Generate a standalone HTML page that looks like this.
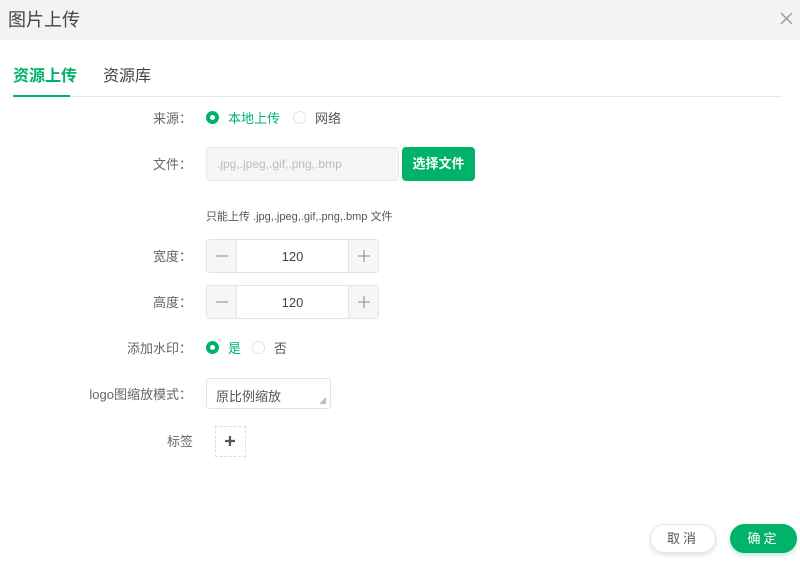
<!DOCTYPE html>
<html><head><meta charset="utf-8"><style>
*{box-sizing:border-box;margin:0;padding:0}
body{width:800px;height:562px;background:#fff;font-family:"Liberation Sans","Noto Sans CJK SC",sans-serif;position:relative;overflow:hidden;color:#555}
.a{position:absolute}
.hd{left:0;top:0;width:800px;height:40px;background:#f4f3f1}
.lbl{right:608px;font-size:13px;color:#666;text-align:right;white-space:nowrap}
.radio{width:13px;height:13px;border-radius:50%}
.on{background:#fff;border:4px solid #00b26a}
.off{border:1px solid #e4e4e4;background:#fff}
.num{width:173px;height:34px;border:1px solid #e2e4e8;border-radius:3px;display:flex;font-size:13px;color:#444}
.num div{display:flex;align-items:center;justify-content:center}
.num .b{width:29px;background:#f5f6f8}
.num .m{flex:1;border-left:1px solid #e2e4e8;border-right:1px solid #e2e4e8}
</style></head><body>
<div class="a hd"></div>
<div class="a" style="left:8px;top:6px;font-size:18px;color:#444">图片上传</div>
<svg class="a" style="left:780px;top:12px" width="13" height="13"><path d="M1 1L12 12M12 1L1 12" stroke="#999" stroke-width="1.4"/></svg>
<div class="a" style="left:13px;top:62px;font-size:16px;font-weight:bold;color:#00b26a">资源上传</div>
<div class="a" style="left:103px;top:62px;font-size:16px;color:#444">资源库</div>
<div class="a" style="left:13px;top:96px;width:769px;height:1px;background:#e6e6e6"></div>
<div class="a" style="left:13px;top:95px;width:57px;height:2px;background:#00b26a"></div>

<div class="a lbl" style="top:108px">来源：</div>
<div class="a radio on" style="left:206px;top:111px"></div>
<div class="a" style="left:228px;top:108px;font-size:13px;color:#00b26a">本地上传</div>
<div class="a radio off" style="left:293px;top:111px"></div>
<div class="a" style="left:315px;top:108px;font-size:13px;color:#555">网络</div>

<div class="a lbl" style="top:154px">文件：</div>
<div class="a" style="left:206px;top:147px;width:193px;height:34px;background:#f5f6f7;border:1px solid #e8e9eb;border-radius:3px;font-size:12px;color:#bbb;padding:9px 0 0 10px">.jpg,.jpeg,.gif,.png,.bmp</div>
<div class="a" style="left:402px;top:147px;width:73px;height:34px;background:#00b26a;border-radius:4px;color:#fff;font-size:13px;font-weight:bold;text-align:center;line-height:34px">选择文件</div>
<div class="a" style="left:206px;top:208px;font-size:11px;color:#555">只能上传 .jpg,.jpeg,.gif,.png,.bmp 文件</div>

<div class="a lbl" style="top:246px">宽度：</div>
<div class="a num" style="left:206px;top:239px"><div class="b"><svg width="12" height="12"><path d="M0 6H12" stroke="#888"/></svg></div><div class="m">120</div><div class="b"><svg width="12" height="12"><path d="M0 6H12M6 0V12" stroke="#888"/></svg></div></div>
<div class="a lbl" style="top:292px">高度：</div>
<div class="a num" style="left:206px;top:285px"><div class="b"><svg width="12" height="12"><path d="M0 6H12" stroke="#888"/></svg></div><div class="m">120</div><div class="b"><svg width="12" height="12"><path d="M0 6H12M6 0V12" stroke="#888"/></svg></div></div>

<div class="a lbl" style="top:338px">添加水印：</div>
<div class="a radio on" style="left:206px;top:341px"></div>
<div class="a" style="left:228px;top:338px;font-size:13px;color:#00b26a">是</div>
<div class="a radio off" style="left:252px;top:341px"></div>
<div class="a" style="left:274px;top:338px;font-size:13px;color:#555">否</div>

<div class="a lbl" style="top:384px">logo图缩放模式：</div>
<div class="a" style="left:206px;top:378px;width:125px;height:31px;border:1px solid #e2e4e8;border-radius:3px;font-size:13px;color:#555;padding:7px 0 0 9px">原比例缩放</div>
<svg class="a" style="left:319px;top:397px" width="7" height="7"><path d="M7 0V7H0Z" fill="#bbb"/></svg>

<div class="a lbl" style="top:431px;right:607px">标签</div>
<div class="a" style="left:215px;top:426px;width:31px;height:31px;border:1px dashed #ddd"></div>
<svg class="a" style="left:225px;top:436px" width="10" height="10"><path d="M0 5H10M5 0V10" stroke="#555" stroke-width="2.2"/></svg>

<div class="a" style="left:650px;top:524px;width:66px;height:29px;border:1px solid #e6e6e6;border-radius:15px;box-shadow:0 2px 5px rgba(0,0,0,.12);font-size:13px;color:#555;text-align:center;line-height:27px;letter-spacing:3px">取消</div>
<div class="a" style="left:730px;top:524px;width:67px;height:29px;background:#00b26a;border-radius:15px;box-shadow:0 2px 5px rgba(0,178,106,.3);font-size:13px;color:#fff;text-align:center;line-height:29px;letter-spacing:3px">确定</div>
</body></html>
